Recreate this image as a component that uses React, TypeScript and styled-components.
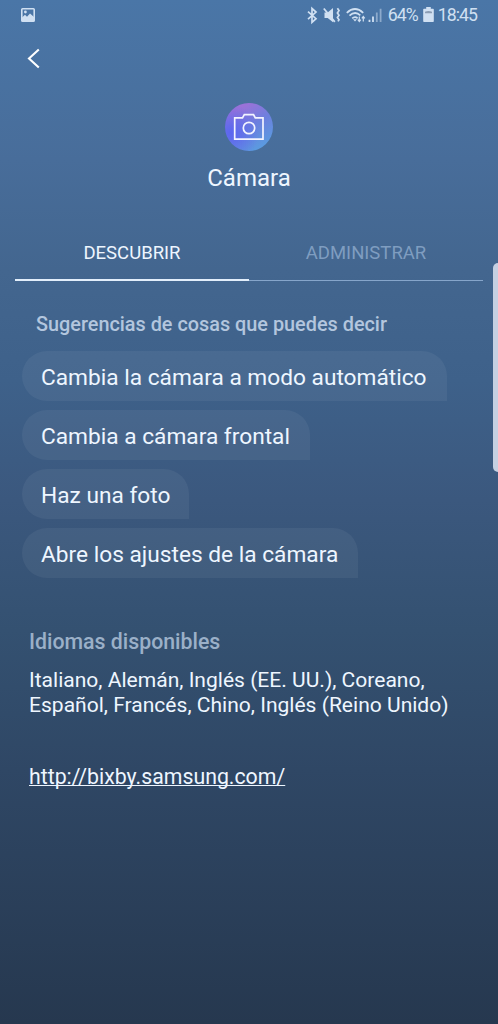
import React from 'react';
import styled, { createGlobalStyle } from 'styled-components';

const GlobalStyle = createGlobalStyle`
  * { box-sizing: border-box; }
  body { margin: 0; }
`;

const Screen = styled.div`
  position: relative;
  display: flex;
  flex-direction: column;
  width: 498px;
  height: 1024px;
  overflow: hidden;
  font-family: Roboto, sans-serif;
  color: #eef6ff;
  background: linear-gradient(180deg, #4a76a7 0, #486d9a 160px, #43668f 270px, #3e618a 380px, #3b587e 500px, #345171 630px, #2f4765 770px, #26384f 1024px);
`;

const StatusBar = styled.header`
  display: flex;
  align-items: center;
  justify-content: space-between;
  height: 30px;
  padding: 0 21px 1px 21px;
  color: #d0e0f2;
`;

const StatusIcons = styled.div`
  display: flex;
  align-items: center;
`;

const StatusText = styled.span`
  font-size: 17.7px;
  line-height: 30px;
  white-space: nowrap;
  letter-spacing: -0.95px;
`;

const Battery = styled.svg`
  display: block;
  margin: 0 4px 0 5px;
`;

const BackButton = styled.button`
  display: block;
  width: 40px;
  height: 40px;
  margin: 8px 0 0 14px;
  padding: 0;
  border: 0;
  background: none;
  color: #fff;
  svg { display: block; }
`;

const AppHeader = styled.section`
  display: flex;
  flex-direction: column;
  align-items: center;
  height: 148px;
  padding-top: 25px;
`;

const AppIcon = styled.div`
  display: grid;
  place-items: center;
  width: 48px;
  height: 48px;
  border-radius: 50%;
  background:
    radial-gradient(circle at 12% 62%, #5c66f0 0, rgba(92, 102, 240, 0) 55%),
    linear-gradient(150deg, #9a72d8 18%, #6c80de 50%, #5b9ae0 85%);
`;

const AppName = styled.h1`
  margin: 11px 0 0;
  font-size: 24px;
  font-weight: 400;
  line-height: 32px;
`;

const Tabs = styled.nav`
  display: flex;
  height: 55px;
  margin: 0 15px;
`;

const Tab = styled.div<{ $active?: boolean }>`
  position: relative;
  flex: 1;
  padding-top: 13px;
  font-size: 18.5px;
  line-height: 28px;
  text-align: center;
  color: ${(p) => (p.$active ? '#eef6ff' : '#7f9dc0')};
  &::after {
    content: '';
    position: absolute;
    left: 0;
    right: 0;
    bottom: 0;
    height: ${(p) => (p.$active ? 2 : 1)}px;
    background: ${(p) => (p.$active ? '#e2eefb' : '#86a5ca')};
  }
`;

const SuggestionHeading = styled.h2`
  margin: 30px 0 0 36px;
  font-size: 19.85px;
  font-weight: 500;
  line-height: 28px;
  color: #b3c6de;
`;

const Suggestions = styled.ul`
  display: flex;
  flex-direction: column;
  align-items: flex-start;
  gap: 9px;
  margin: 12px 0 0 22px;
  padding: 0;
  list-style: none;
`;

const Bubble = styled.li<{ $width: number }>`
  width: ${(p) => p.$width}px;
  height: 50px;
  padding-left: 19px;
  border-radius: 25px 25px 0 25px;
  background: rgba(255, 255, 255, 0.055);
  font-size: 22.7px;
  line-height: 54px;
  white-space: nowrap;
`;

const Languages = styled.section`
  margin: 50px 0 0 29px;
`;

const LanguagesHeading = styled.h2`
  margin: 0;
  font-size: 21.3px;
  font-weight: 500;
  line-height: 28px;
  color: #9bb0c8;
`;

const LanguageList = styled.p`
  margin: 11px 0 0;
  font-size: 21.05px;
  line-height: 25px;
  white-space: nowrap;
`;

const Link = styled.a`
  display: inline-block;
  margin-top: 47px;
  font-size: 21.3px;
  line-height: 25px;
  color: inherit;
  text-decoration: underline;
  text-decoration-thickness: 1px;
  text-underline-offset: 1px;
  text-decoration-skip-ink: none;
`;

const EdgeHandle = styled.div`
  position: absolute;
  top: 263px;
  right: 0;
  width: 5px;
  height: 209px;
  border-radius: 5px 0 0 5px;
  background: #c5d0e2;
`;

const suggestions = [
  { text: 'Cambia la cámara a modo automático', width: 425 },
  { text: 'Cambia a cámara frontal', width: 288 },
  { text: 'Haz una foto', width: 167 },
  { text: 'Abre los ajustes de la cámara', width: 336 },
];

const PictureIcon = () => (
  <svg width="14" height="14" viewBox="0 0 14 14" fill="none">
    <rect x="0.8" y="0.8" width="12.4" height="12.4" rx="0.8" stroke="currentColor" strokeWidth="1.6" />
    <path d="M1 13V9.4l3-2.6 2 2 3-3.4 4 3.6v4Z" fill="currentColor" />
    <circle cx="4.4" cy="4" r="1.4" fill="currentColor" />
  </svg>
);

const SignalIcons = () => (
  <svg width="82" height="30" viewBox="306 -0.5 82 30" fill="none" stroke="currentColor">
    <path d="M308 11.2l8 7-4 3.6V8l4 3.6-8 7" strokeWidth="1.7" />
    <path d="M324.5 12h3.2l5.3-4.6v14.4l-5.3-4.4h-3.2Z" fill="currentColor" stroke="none" />
    <path d="M323.8 8l11 13.4" strokeWidth="1.8" />
    <path d="M337.4 7.8l1.6 2.3-1.6 2.3 1.6 2.3-1.6 2.3 1.6 2.3-1 1.6" strokeWidth="1.7" />
    <path d="M346.8 12.3Q355 4.8 363.2 12.3M349.5 15.2Q355 10 360.3 14.8M352.2 17.9Q355 15.4 357.6 17.8" strokeWidth="1.8" />
    <path d="M353 18.7h4l-2 2.3Z" fill="currentColor" stroke="none" />
    <path d="M359.3 16v5M357.8 19.2l1.5 1.8 1.5-1.8M363.3 21v-5M361.8 17.8l1.5-1.8 1.5 1.8" strokeWidth="1.2" />
    <path d="M369.5 21.5v-2.2M373 21.5v-5.5" strokeWidth="1.8" />
    <path d="M376.8 21.5V12M380.6 21.5V8.2" strokeWidth="1.8" opacity="0.5" />
  </svg>
);

const BatteryIcon = () => (
  <Battery width="11" height="15" viewBox="0 0 11 15">
    <path d="M3.2 0h4.6v1.8H10a.8.8 0 0 1 .8.8v11.6a.8.8 0 0 1-.8.8H1a.8.8 0 0 1-.8-.8V2.6a.8.8 0 0 1 .8-.8h2.2Z" fill="currentColor" />
    <path d="M2 6.2V4.7q3.5-1.4 7 0v1.5Z" fill="#8b9db4" />
  </Battery>
);

const BackIcon = () => (
  <svg width="40" height="40" viewBox="0 0 40 40" fill="none" stroke="currentColor" strokeWidth="2.1">
    <path d="M24.8 11.4L15 20.5l9.8 9.1" />
  </svg>
);

const CameraIcon = () => (
  <svg width="32" height="28" viewBox="0 0 32 28" fill="none" stroke="#f3f4ff" strokeWidth="1.7">
    <path d="M1.7 4.8h7.8l1.8-3.2h9.2l1.8 3.2H30v21.4H1.7Z" />
    <circle cx="16" cy="15" r="5.7" />
  </svg>
);

export default function App() {
  return (
    <>
      <GlobalStyle />
      <Screen>
        <StatusBar>
          <PictureIcon />
          <StatusIcons>
            <SignalIcons />
            <StatusText>64%</StatusText>
            <BatteryIcon />
            <StatusText>18:45</StatusText>
          </StatusIcons>
        </StatusBar>
        <BackButton aria-label="Atrás">
          <BackIcon />
        </BackButton>
        <AppHeader>
          <AppIcon>
            <CameraIcon />
          </AppIcon>
          <AppName>Cámara</AppName>
        </AppHeader>
        <Tabs>
          <Tab $active>DESCUBRIR</Tab>
          <Tab>ADMINISTRAR</Tab>
        </Tabs>
        <SuggestionHeading>Sugerencias de cosas que puedes decir</SuggestionHeading>
        <Suggestions>
          {suggestions.map((s) => (
            <Bubble key={s.text} $width={s.width}>
              {s.text}
            </Bubble>
          ))}
        </Suggestions>
        <Languages>
          <LanguagesHeading>Idiomas disponibles</LanguagesHeading>
          <LanguageList>
            Italiano, Alemán, Inglés (EE. UU.), Coreano,
            <br />
            Español, Francés, Chino, Inglés (Reino Unido)
          </LanguageList>
          <Link href="http://bixby.samsung.com/">http://bixby.samsung.com/</Link>
        </Languages>
        <EdgeHandle />
      </Screen>
    </>
  );
}
